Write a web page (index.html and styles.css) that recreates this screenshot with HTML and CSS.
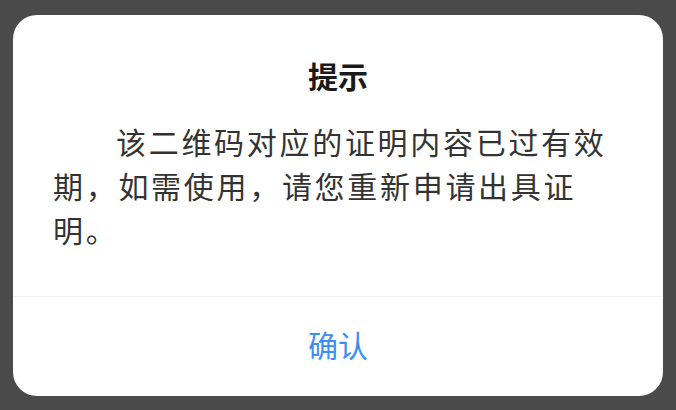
FILE: index.html
```html
<!DOCTYPE html>
<html lang="zh-CN">
<head>
<meta charset="UTF-8" />
<title>提示</title>
<link rel="stylesheet" href="styles.css">
</head>
<body>

<div class="mask">
  <div class="dialog">
    <div class="dialog-hd">提示</div>
    <div class="dialog-bd">该二维码对应的证明内容已过有效期，如需使用，请您重新申请出具证明。</div>
    <div class="dialog-ft">
      <button class="btn-ok">确认</button>
    </div>
  </div>
</div>

</body>
</html>
```
FILE: styles.css
```css
/*―― 背景 ――*/
html, body      { margin: 0; padding: 0; height: 100%; }
body            { background: #4a4a4a; font-family: "Noto Sans CJK SC", "Noto Sans", sans-serif; }

.mask           { padding: 15px 13px 0; }

/*―― ダイアログ ――*/
.dialog {
  background: #fff;
  border-radius: 24px;
  height: 381px;
  display: flex; flex-direction: column;
  overflow: hidden;
}
.dialog-hd {
  padding-top: 40px;
  font-size: 30px; line-height: 40px; font-weight: 600;
  color: #1a1a1a;
  text-align: center;
}
.dialog-bd {
  margin-top: 24px;
  padding: 0 40px;
  flex: 1;
  font-size: 30px; line-height: 44px;
  letter-spacing: 2.7px;
  text-indent: 63px;
  color: #333;
}
.dialog-ft {
  border-top: 1px solid #f3f3f3;
  height: 100px;
  padding-bottom: 6px; box-sizing: border-box;
  display: flex; align-items: center; justify-content: center;
}
.btn-ok {
  border: none; background: none; padding: 0;
  font: inherit; font-size: 30px;
  color: #3d8ef2;
}
```
